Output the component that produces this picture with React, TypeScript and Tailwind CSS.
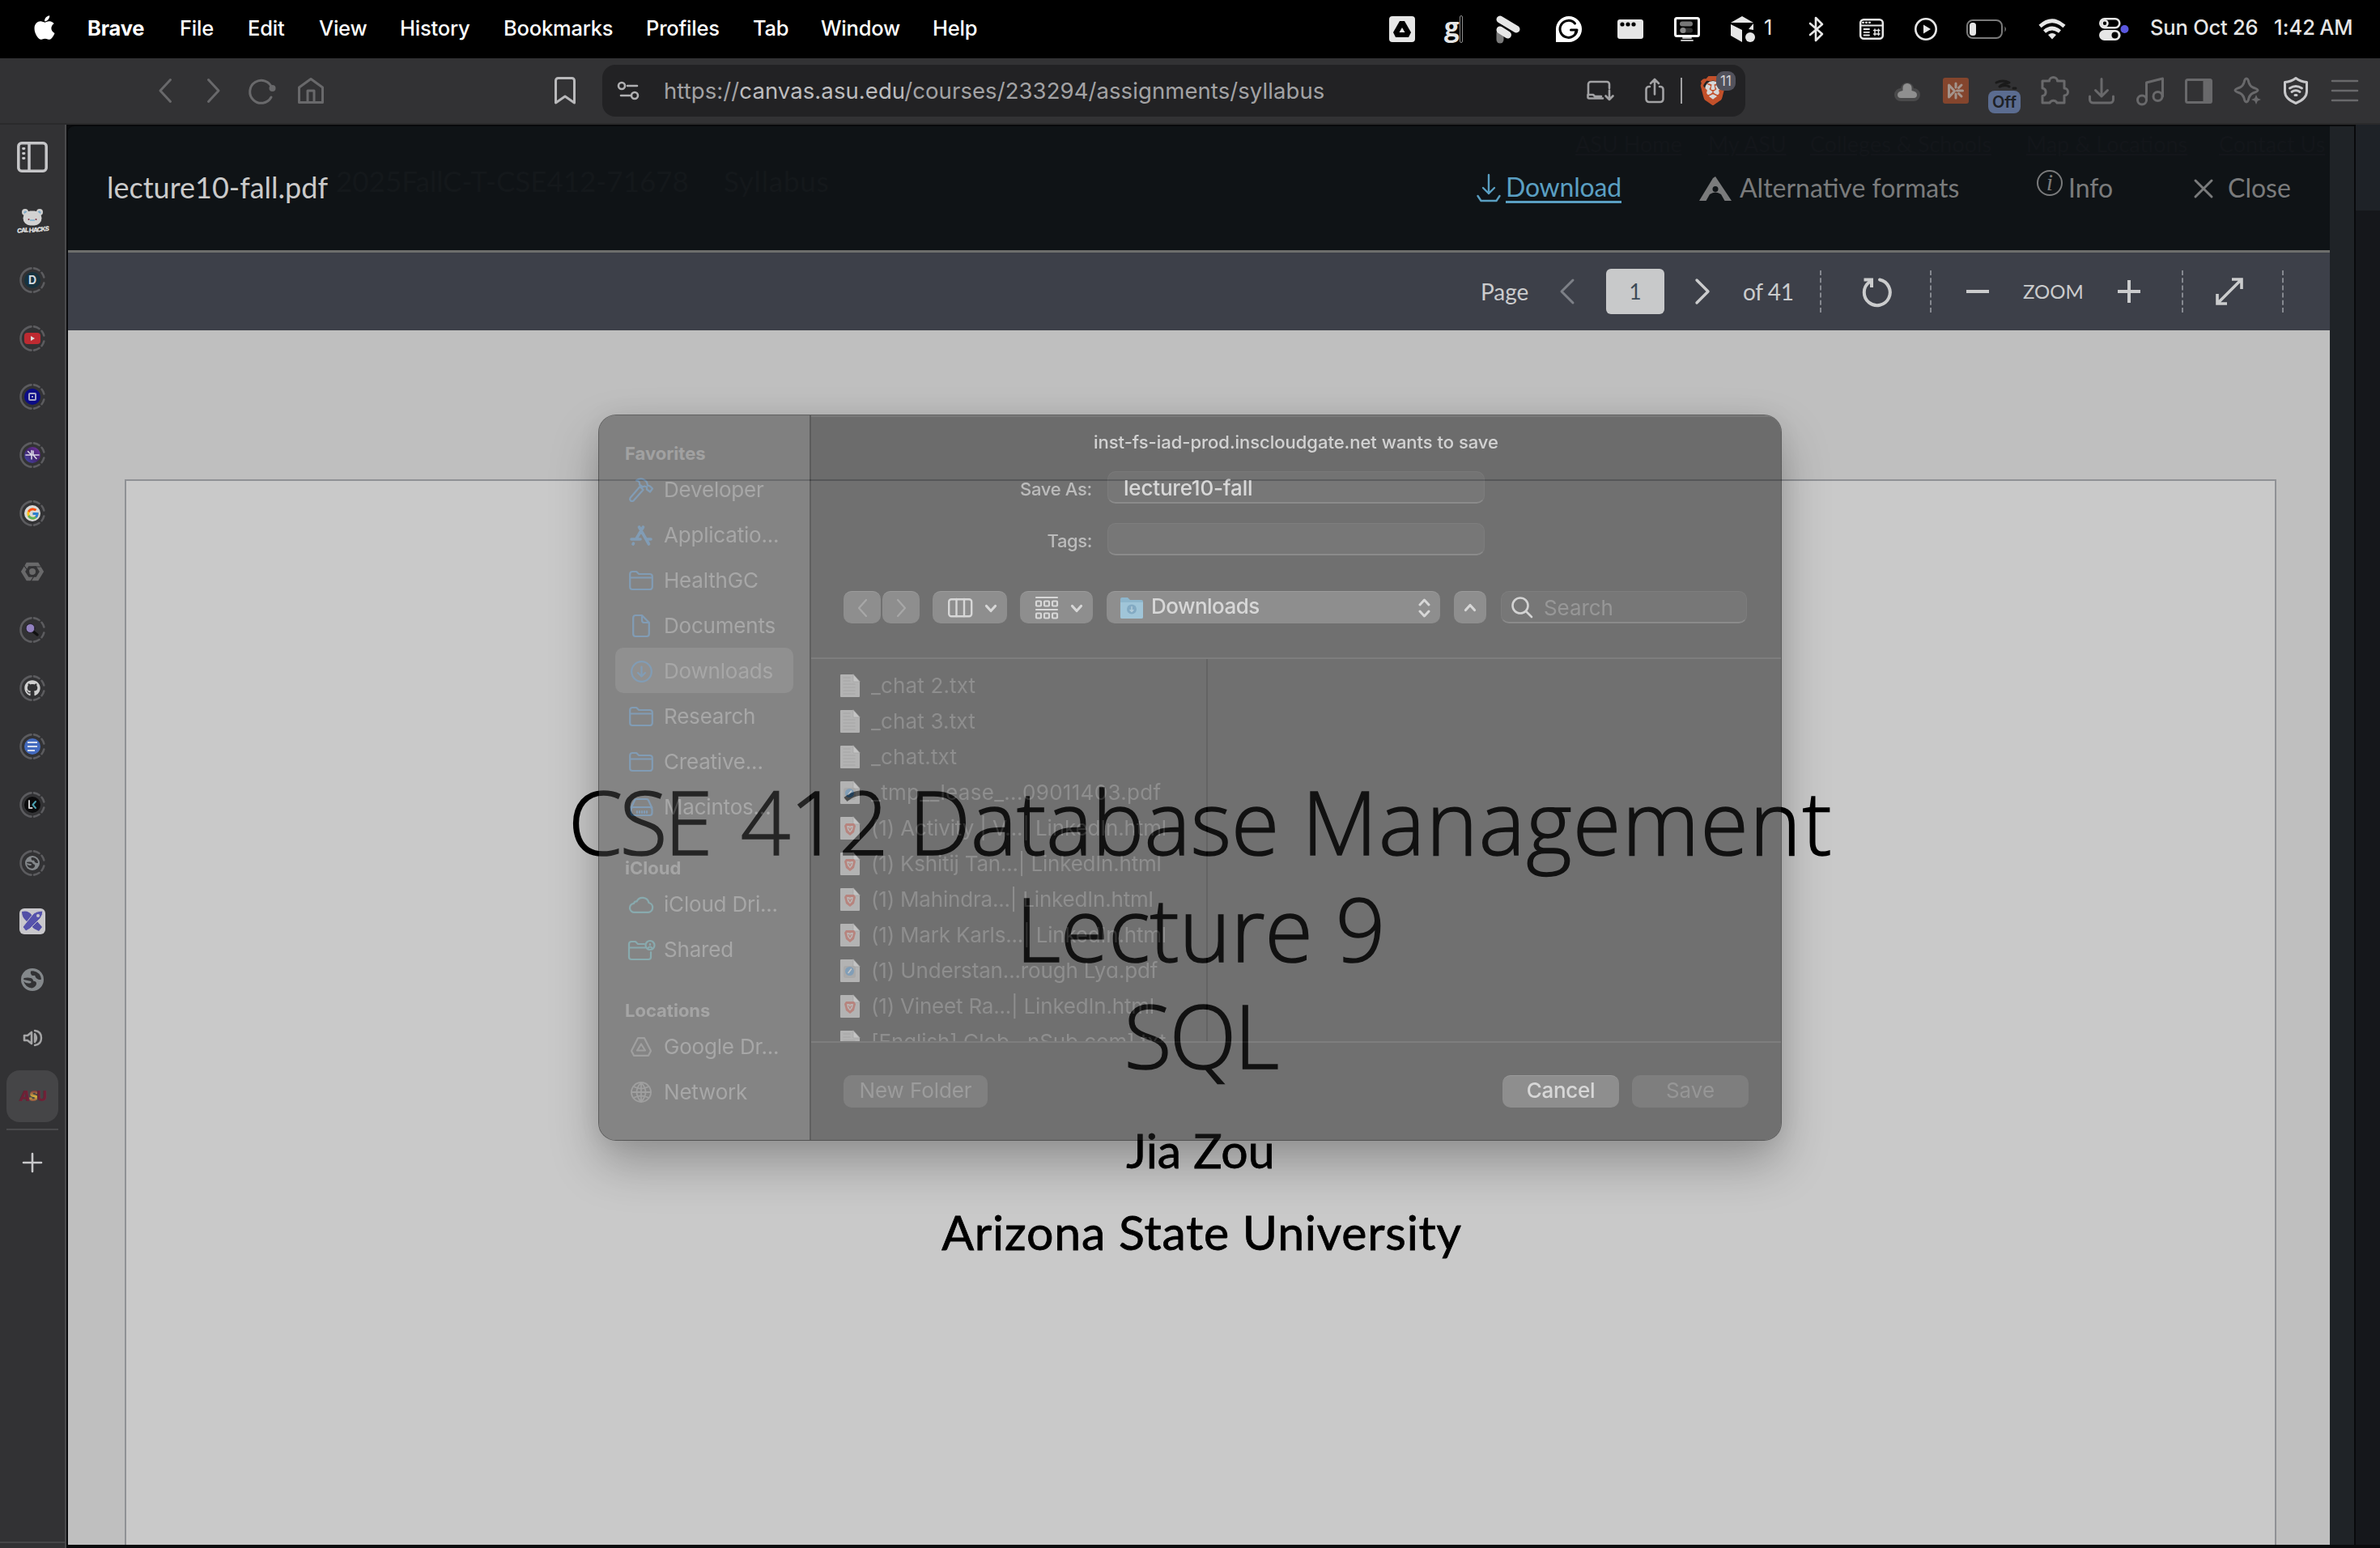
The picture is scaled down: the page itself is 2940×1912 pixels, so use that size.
import type { ReactNode } from "react";
import { FaApple, FaGithub } from "react-icons/fa";
import { FcGoogle } from "react-icons/fc";
import { SiBrave } from "react-icons/si";

function Svg({ w, h, className = "", sw = 2, children }: { w: number; h: number; className?: string; sw?: number; children: ReactNode }) {
  return (
    <svg
      width={w}
      height={h}
      viewBox={`0 0 ${w} ${h}`}
      fill="none"
      stroke="currentColor"
      strokeWidth={sw}
      strokeLinecap="round"
      strokeLinejoin="round"
      className={`block shrink-0 overflow-visible ${className}`}
    >
      {children}
    </svg>
  );
}

const menus = [
  { label: "File", w: "w-[84px]" },
  { label: "Edit", w: "w-[88px]" },
  { label: "View", w: "w-[100px]" },
  { label: "History", w: "w-[128px]" },
  { label: "Bookmarks", w: "w-[176px]" },
  { label: "Profiles", w: "w-[132px]" },
  { label: "Tab", w: "w-[84px]" },
  { label: "Window", w: "w-[138px]" },
  { label: "Help", w: "w-[80px]" },
];

function MenuBar() {
  return (
    <header className="flex h-[72px] shrink-0 items-center bg-black pb-[3px] text-[25.5px] font-medium leading-none tracking-[-0.2px] text-white">
      <FaApple className="ml-[38px] mt-[-2px] size-[34px] shrink-0" />
      <span className="ml-[36px] w-[114px] font-bold">Brave</span>
      {menus.map((m) => (
        <span key={m.label} className={`${m.w} shrink-0`}>
          {m.label}
        </span>
      ))}
      <div className="ml-auto flex h-[72px] items-center pt-[3px] text-[#e6e6e6]">
        <Svg w={32} h={32}>
          <rect width="32" height="32" rx="4" fill="#e6e6e6" stroke="none" />
          <path d="M13 6h6l8 14-3 6H8l-3-6z" fill="#000" stroke="none" />
          <path d="M16 14l3.500 6h-7z" fill="#e6e6e6" stroke="none" />
        </Svg>
        <span className="ml-[36px] flex w-[24px] items-center">
          <span className="mt-[-8px] font-['Open_Sans'] text-[33px] font-bold leading-none tracking-normal">g</span>
          <span className="h-[34px] w-[4px] shrink-0 rounded-sm border border-[#8a8a8a]" />
        </span>
        <Svg w={30} h={34} className="ml-[40px]" sw={9}>
          <path d="M5 22v8" stroke="#7a7a7a" />
          <path d="M5 5l20 12" />
          <path d="M5 18l9.500 6" />
        </Svg>
        <Svg w={32} h={32} className="ml-[44px]" sw={3}>
          <path d="M0 32V16a16 16 0 1 1 16 16z" fill="#fff" stroke="none" />
          <path d="M23.500 9A10.500 10.500 0 1 0 26 17h-7.500M26 17l-2 4" stroke="#000" />
        </Svg>
        <Svg w={32} h={24} className="ml-[44px]">
          <rect width="32" height="24" rx="3" fill="#e6e6e6" stroke="none" />
          <g fill="#000" stroke="none">
            <circle cx="6" cy="6" r="2.600" />
            <circle cx="13" cy="6" r="2.600" />
            <circle cx="20" cy="6" r="2.600" />
          </g>
        </Svg>
        <Svg w={32} h={30} className="ml-[38px]" sw={3}>
          <rect x="1.500" y="1.500" width="29" height="22" rx="2" stroke="#fff" />
          <rect x="7" y="5.500" width="16" height="6" rx="3" fill="#777" stroke="none" />
          <rect x="7" y="13.500" width="16" height="6" rx="3" fill="#333" stroke="none" />
          <circle cx="11" cy="16.500" r="3.500" fill="#888" stroke="none" />
          <path d="M11 26h10M9 29h14" strokeWidth="2" stroke="#bbb" />
        </Svg>
        <Svg w={30} h={32} className="ml-[38px]">
          <g fill="#e6e6e6" stroke="none">
            <path d="M14 0l14 8H0z" />
            <path d="M0 10l14 7v15L0 24z" />
            <path d="M28 9v8l-6-1 6-7z" />
            <circle cx="24" cy="26" r="6" />
          </g>
        </Svg>
        <span className="ml-[11px] mt-[-5px] w-[14px] font-normal">1</span>
        <Svg w={17} h={30} className="ml-[42px]" sw={2.600}>
          <path d="M1 8l15 13-8 8V1l8 8L1 22" />
        </Svg>
        <Svg w={30} h={26} className="ml-[45px]" sw={2.500}>
          <rect x="1.200" y="1.200" width="27.600" height="23.600" rx="4" />
          <path d="M4 4.800h1M8 4.800h1M12 4.800h1" strokeWidth="2.200" />
          <path d="M1.500 8.500h27" strokeWidth="1.800" />
          <path d="M5.500 13h6.500M5.500 16.800h6.500M5.500 20.500h6.500" strokeWidth="1.800" />
          <path d="M17.500 14.500h7.500M17.500 19h7.500M19 13v7.500M23.500 13v7.500" strokeWidth="1.500" />
        </Svg>
        <Svg w={28} h={28} className="ml-[38px]" sw={2.600}>
          <circle cx="14" cy="14" r="12.700" />
          <path d="M11 8.500v11l9-5.500z" fill="#e6e6e6" stroke="none" />
        </Svg>
        <Svg w={50} h={24} className="ml-[36px]" sw={2}>
          <rect x="1" y="1" width="43" height="22" rx="7" stroke="#7a7a7a" />
          <path d="M47.500 8.500q3 3.500 0 7z" fill="#7a7a7a" stroke="none" />
          <rect x="4" y="4" width="8" height="16" rx="3.500" fill="#e6e6e6" stroke="none" />
        </Svg>
        <Svg w={34} h={26} className="ml-[39px]" sw={4.600}>
          <path d="M2 9.500q15-13.500 30 0M7.500 16q9.500-8 19 0" strokeLinecap="butt" />
          <path d="M12 20q5-4 10 0L17 25.500z" fill="#e6e6e6" stroke="none" />
        </Svg>
        <Svg w={38} h={28} className="ml-[41px]" sw={2.600}>
          <rect x="1.300" y="1.300" width="24" height="11" rx="5.500" />
          <circle cx="7" cy="6.800" r="3.500" />
          <rect x="0" y="15" width="26.600" height="13" rx="6.500" fill="#e6e6e6" stroke="none" />
          <circle cx="19.500" cy="21.500" r="4" fill="#000" stroke="none" />
          <circle cx="31.500" cy="14" r="5" fill="#5b58e0" stroke="none" />
        </Svg>
        <span className="ml-[25px] mt-[-5px] w-[153px] shrink-0 whitespace-nowrap">Sun Oct 26</span>
        <span className="mr-[20px] mt-[-5px] w-[111px] shrink-0 whitespace-nowrap tracking-[0.1px]">
          1:42<span className="ml-[5px]">AM</span>
        </span>
      </div>
    </header>
  );
}

function BraveShield({ className }: { className: string }) {
  return (
    <span className={`relative flex shrink-0 items-center justify-center ${className}`}>
      <span className="absolute left-[22%] top-[18%] h-[62%] w-[56%] rounded-[10px] bg-[#d8d8d8]" />
      <SiBrave className="relative size-full" />
    </span>
  );
}

function BrowserBar() {
  return (
    <div className="flex h-[82px] shrink-0 items-center border-b-2 border-[#2a2a2b] bg-[#323234] text-[#69696b]">
      <Svg w={16} h={30} className="ml-[196px]" sw={3}>
        <path d="M14.500 1.500L2 15l12.500 13.500" />
      </Svg>
      <Svg w={16} h={30} className="ml-[44px]" sw={3}>
        <path d="M1.500 1.500L14 15 1.500 28.500" />
      </Svg>
      <Svg w={34} h={32} className="ml-[35px]" sw={3}>
        <path d="M29 13A14 14 0 1 0 28 24" />
        <circle cx="29.500" cy="13" r="4" fill="currentColor" stroke="none" />
      </Svg>
      <Svg w={32} h={32} className="ml-[27px]" sw={3}>
        <path d="M1.500 12L16 1.500 30.500 12v18.500h-29zM12 30V16h8v14" />
      </Svg>
      <Svg w={26} h={34} className="ml-[285px] text-[#b9b9bb]" sw={3}>
        <path d="M1.500 4.500a3 3 0 0 1 3-3h17a3 3 0 0 1 3 3v27.500L13 24 1.500 32z" />
      </Svg>
      <div className="ml-[33px] flex h-[64px] w-[1412px] shrink-0 items-center rounded-[16px] bg-[#222224] text-[#a2a2a4]">
        <Svg w={26} h={22} className="ml-[19px] text-[#b0b0b2]" sw={2.600}>
          <circle cx="5" cy="5" r="4" />
          <path d="M12 5h12M4 17h12" />
          <circle cx="21" cy="17" r="4" />
        </Svg>
        <span className="ml-[31px] w-[1128px] whitespace-nowrap pt-px text-[27.5px] leading-none tracking-[0.08px]">
          https://<span className="text-[#bcbcbe]">canvas.asu.edu</span>/courses/233294/assignments/syllabus
        </span>
        <Svg w={34} h={26} className="ml-[12px]" sw={2.600}>
          <path d="M28 10V5a3 3 0 0 0-3-3H5a3 3 0 0 0-3 3v13M20 22.500H3a1.500 1.500 0 0 1-1.500-1.500v-3H8l2 2h8" />
          <path d="M28 12.500V24M23.500 19.500L28 24l4.500-4.500" />
        </Svg>
        <Svg w={24} h={32} className="ml-[38px]" sw={2.600}>
          <path d="M6 11H5a3.500 3.500 0 0 0-3.500 3.500v12A3.500 3.500 0 0 0 5 30h14a3.500 3.500 0 0 0 3.500-3.500v-12A3.500 3.500 0 0 0 19 11h-1M12 20.500V2M7 7l5-5 5 5" />
        </Svg>
        <span className="ml-[20px] h-[32px] w-[2px] shrink-0 bg-[#a2a2a4]" />
        <span className="relative ml-[20px] shrink-0">
          <BraveShield className="h-[36px] w-[36px] text-[#c2502a]" />
          <span className="absolute left-[22px] top-[-6px] flex size-[24px] items-center justify-center rounded-[9px] bg-[#52525c] text-[17px] leading-none text-[#d4d4d4]">
            11
          </span>
        </span>
      </div>
      <Svg w={32} h={26} className="ml-[184px]">
        <path d="M9 11a7 7 0 0 1 14 0a7 7 0 0 1 8 7a7 7 0 0 1-7 7H8a7 7 0 0 1-7-7a7 7 0 0 1 8-7z" fill="#4a4a4b" stroke="#4a4a4b" />
        <path d="M10.500 13V9.500a5.500 5.500 0 0 1 11 0V13q6.500 1 6.500 5 0 4-4 4H8q-4 0-4-4 0-4 6.500-5z" fill="#8f8f8f" stroke="none" />
      </Svg>
      <Svg w={32} h={32} className="ml-[28px]" sw={3}>
        <rect width="32" height="32" rx="3" fill="#84452d" stroke="none" />
        <path d="M7.500 9v15l7-7.500zM17.500 16h7M16 12V7M16 20v5M19.500 12.500l3.500-3.500M19.500 19.500l3.500 3.500" stroke="#a3948c" />
      </Svg>
      <div className="ml-[24px] flex w-[40px] shrink-0 flex-col items-center pt-[14px]">
        <Svg w={30} h={14} className="text-[#1a1a1a]" sw={3}>
          <path d="M5 4q8-4 16 0q-8 1-12 5q8-3 12 0M26 11h3" />
        </Svg>
        <span className="flex h-[28px] w-[40px] items-center justify-center rounded-[8px] bg-[#5b6c90] pb-px text-[20px] font-semibold leading-none text-[#1e2126]">
          Off
        </span>
      </div>
      <Svg w={34} h={34} className="ml-[25px]" sw={3}>
        <path d="M2 5h8.500a5 4.500 0 0 1 10 0H29v9a4.500 4.500 0 0 1 0 9v9h-9a5 5 0 0 0-9 0H2v-8.500a4.800 4.800 0 0 0 0-9.500z" />
      </Svg>
      <Svg w={32} h={32} className="ml-[25px]" sw={3}>
        <path d="M16 1.500V23M8.500 15.500L16 23l7.500-7.500M1.500 23v4a4 4 0 0 0 4 4h21a4 4 0 0 0 4-4v-4" />
      </Svg>
      <Svg w={34} h={34} className="ml-[27px]" sw={3}>
        <path d="M12.500 28.500V7l20-5v22" />
        <circle cx="7" cy="28.500" r="5.500" />
        <circle cx="26.500" cy="24" r="5.500" />
      </Svg>
      <Svg w={34} h={31} className="ml-[26px]" sw={3}>
        <rect x="1.500" y="1.500" width="31" height="28" rx="2" />
        <path d="M24 2h8v27h-8z" fill="currentColor" />
      </Svg>
      <Svg w={34} h={34} className="ml-[26px]" sw={3}>
        <path d="M16 2q2 0 3 5 1 4 5 6 6 2 6 3.500t-6 3.500q-4 2-5 6-1 5-3 5t-3-5q-1-4-5-6-6-2-6-3.500T8 13q4-2 5-6 1-5 3-5z" />
        <path d="M28 22l1.800 4.200L34 28l-4.200 1.800L28 34l-1.800-4.200L22 28l4.200-1.800z" fill="currentColor" stroke="none" />
      </Svg>
      <Svg w={30} h={34} className="ml-[28px] text-[#c8c8ca]" sw={3}>
        <path d="M15 1.500q6 4.500 13.500 5V18q0 9-13.500 14.500Q1.500 27 1.500 18V6.500Q9 6 15 1.500z" />
        <path d="M7.500 14q7.500-5 15 0M10 18.500q5-3.500 10 0M14 22.500h2" />
      </Svg>
      <Svg w={32} h={26} className="ml-[29px]" sw={2.600}>
        <path d="M1 1h31M1 13h31M1 25h31" />
      </Svg>
    </div>
  );
}

function Ring({ children }: { children: ReactNode }) {
  return (
    <div className="grid place-items-center">
      <Svg w={32} h={32} sw={2.600} className="col-start-1 row-start-1 text-[#5c5c5f]">
        <path d="M14.500 1.400A14.700 14.700 0 0 0 14.500 30.600" />
        <path d="M18 1.400A14.700 14.700 0 0 1 24.500 4M27.500 6.800A14.700 14.700 0 0 1 30.300 12.500M30.300 19.500A14.700 14.700 0 0 1 27.500 25.200M24.500 28A14.700 14.700 0 0 1 18 30.600" />
      </Svg>
      <div className="col-start-1 row-start-1">{children}</div>
    </div>
  );
}

function Globe({ size }: { size: number }) {
  return (
    <svg width={size} height={size} viewBox="0 0 28 28" className="block">
      <circle cx="14" cy="14" r="14" fill="#84888b" />
      <path d="M3.500 12q5-1 8.500 0 3 1 3 3.500 4 .5 4 3 0 4-5.500 6A11 11 0 0 1 3.200 16q3 3 7 2.500 3 0 2-2.500-4-1-9-2zM12 3.500q-1 3 1 5 3 1 4 0 1 4 4 5 2 1 4 0Q24 5 15 3.300z" fill="#323234" />
    </svg>
  );
}

function TabStrip() {
  const tabs: ReactNode[] = [
    <div className="flex flex-col items-center">
      <Svg w={26} h={20}>
        <g stroke="none">
          <circle cx="4" cy="4" r="4" fill="#cfcfcf" />
          <circle cx="22" cy="4" r="4" fill="#cfcfcf" />
          <circle cx="4.500" cy="4.500" r="2" fill="#7aa7c6" />
          <circle cx="21.500" cy="4.500" r="2" fill="#7aa7c6" />
          <rect x="1.500" y="2.500" width="23" height="18" rx="9" fill="#d2d2d2" />
          <path d="M10 13h6v2h-6z" fill="#8fb9d0" />
          <circle cx="8.500" cy="13" r="1" fill="#7a3040" />
          <circle cx="17.500" cy="13" r="1" fill="#7a3040" />
        </g>
      </Svg>
      <span className="flex -rotate-6 gap-px text-[8px] font-black italic leading-[11px] tracking-[-1px] text-[#d8d8d8]">
        <span>CAL</span>
        <span className="pt-px">HACKS</span>
      </span>
    </div>,
    <Ring>
      <div className="flex size-[20px] items-center justify-center rounded-full bg-[#17333f] text-[14px] font-bold leading-none text-[#d5dbe0]">D</div>
    </Ring>,
    <Ring>
      <div className="flex h-[14px] w-[20px] items-center justify-center rounded-[4px] bg-[#be2a31]">
        <Svg w={5} h={6}>
          <path d="M0 0l5 3-5 3z" fill="#ddd" stroke="none" />
        </Svg>
      </div>
    </Ring>,
    <Ring>
      <div className="flex size-[20px] items-center justify-center rounded-full bg-[#0b0b86]">
        <div className="flex size-[10px] items-center justify-center rounded-[2px] border-2 border-[#a9a9c8]">
          <div className="size-[2px] bg-[#a9a9c8]" />
        </div>
      </div>
    </Ring>,
    <Ring>
      <div className="flex size-[20px] items-center justify-center rounded-full bg-linear-to-tr from-[#3f4bb0] via-[#43246f] to-[#7a35a8]">
        <Svg w={16} h={14} sw={1.600} className="text-[#d8d4e4]">
          <path d="M0 7h16M7 1.500V12M9 2v5l4 4.500M2.500 2.500L7 7" />
        </Svg>
      </div>
    </Ring>,
    <Ring>
      <div className="flex size-[20px] items-center justify-center rounded-full bg-[#d8d8d8]">
        <FcGoogle className="size-[17px] opacity-90" />
      </div>
    </Ring>,
    <Svg w={28} h={24} sw={4.500} className="text-[#69696a]">
      <path d="M8 3h12l5.500 9-5.500 9H8L2.500 12z" strokeLinejoin="miter" />
      <circle cx="14" cy="12" r="4" fill="currentColor" stroke="none" />
      <path d="M4 5l6 8M24 6h-9M12 24l5-8" stroke="#323234" strokeWidth="1.200" />
    </Svg>,
    <Ring>
      <Svg w={20} h={20} sw={3.500}>
        <path d="M11 12l5 4" stroke="#111" />
        <circle cx="7.500" cy="8" r="5.500" fill="#9382c0" stroke="#221f2c" strokeWidth="1" />
      </Svg>
    </Ring>,
    <Ring>
      <FaGithub className="size-[20px] text-[#cfcfcf]" />
    </Ring>,
    <Ring>
      <div className="flex size-[20px] flex-col justify-center gap-[3px] rounded-full bg-[#446bbf] pl-[4px]">
        <div className="h-[2px] w-[12px] bg-[#d5dcec]" />
        <div className="h-[2px] w-[12px] bg-[#d5dcec]" />
        <div className="h-[2px] w-[9px] bg-[#d5dcec]" />
      </div>
    </Ring>,
    <Ring>
      <div className="flex size-[20px] items-center justify-center rounded-full bg-[#0b0b0c]">
        <Svg w={10} h={10} sw={2}>
          <path d="M1 0v9h3.500" stroke="#c8c8c8" />
          <path d="M9 1L5.500 5 9 9" stroke="#4aa0b0" />
        </Svg>
      </div>
    </Ring>,
    <Ring>
      <Globe size={18} />
    </Ring>,
    <Svg w={32} h={32}>
      <rect width="32" height="32" rx="6" fill="#c9c8cc" stroke="none" />
      <path d="M3 4q8-2 12 4l13 15-4 5-6-3L7 14q-4-4-4-10z" fill="#524fa6" stroke="none" />
      <path d="M29 3q-9 0-13 5L4 23l4 5 5-3 13-13q3-4 3-9z" fill="#5653ac" stroke="#c9c8cc" strokeWidth="1" />
      <circle cx="23" cy="9" r="2" fill="#c9c8cc" stroke="none" />
    </Svg>,
    <Globe size={28} />,
    <Svg w={24} h={22} sw={2.600} className="text-[#a5a5a6]">
      <path d="M2 8h4l5-4v14l-5-4H2z" />
      <path d="M15 6q4 5 0 10zM15 2q8 1 8 9t-8 9" strokeWidth="2.400" />
    </Svg>,
  ];
  return (
    <aside className="flex w-[80px] shrink-0 flex-col items-center bg-[#323234]">
      <Svg w={38} h={38} sw={3.500} className="mt-[21px] text-[#c6c6c8]">
        <rect x="1.800" y="1.800" width="34.400" height="34.400" rx="4" />
        <path d="M15 2v34" />
        <path d="M7.500 8.500h1.500M7.500 14.500h1.500M7.500 20.500h1.500" strokeWidth="2.800" />
      </Svg>
      <div className="mt-[25px] flex flex-col">
        {tabs.map((t, i) => (
          <div key={i} className="flex h-[72px] w-[80px] items-center justify-center">
            {t}
          </div>
        ))}
        <div className="flex h-[72px] items-center justify-center">
          <div className="flex size-[64px] items-center justify-center rounded-[16px] bg-[#454547]">
            <span className="flex items-center text-[17px] font-black leading-none tracking-[-1.5px] text-[#6f2136]">
              <span className="italic">A</span>
              <span className="bg-linear-to-b from-[#6f2136] via-[#d3b13c] to-[#6f2136] bg-clip-text italic text-transparent">S</span>
              <span>U</span>
            </span>
          </div>
        </div>
      </div>
      <div className="mt-[4px] h-[2px] w-[64px] bg-[#4a4a4c]" />
      <Svg w={22} h={22} sw={2.600} className="mt-[29px] text-[#c8c8ca]">
        <path d="M11 0v22M0 11h22" />
      </Svg>
      <div className="mb-[6px] mt-auto h-[2px] w-[80px] bg-[#464648]" />
    </aside>
  );
}

function ViewerHeader() {
  const ghostLinks = [
    { t: "ASU Home", w: "w-[164px]" },
    { t: "My ASU", w: "w-[126px]" },
    { t: "Colleges & Schools", w: "w-[267px]" },
    { t: "Map & Locations", w: "w-[238px]" },
    { t: "Contact Us", w: "w-[137px]" },
  ];
  return (
    <div className="relative flex h-[158px] shrink-0 items-center rounded-tl-[8px] border-b-[3px] border-t-2 border-b-[#6d6e6c] border-t-[#08090b] bg-[#0f1316] font-['Lato'] text-[32px] leading-none text-[#7a7b7c]">
      <div className="absolute right-0 top-[8px] flex text-[27px] text-[#13161a]">
        {ghostLinks.map((g) => (
          <span key={g.t} className={`${g.w} shrink-0 whitespace-nowrap underline`}>
            {g.t}
          </span>
        ))}
      </div>
      <div className="absolute left-[331px] top-[50px] flex gap-[43px] whitespace-nowrap text-[35px] text-[#14181b]">
        <span>2025FallC-T-CSE412-71678</span>
        <span className="tracking-[0.8px]">Syllabus</span>
      </div>
      <span className="relative ml-[48px] w-[1692px] pb-[3px] text-[36px] text-[#cacaca]">lecture10-fall.pdf</span>
      <Svg w={30} h={34} sw={2.400} className="relative mt-[-2px] text-[#5a9fc2]">
        <path d="M15 1v23M8 17l7 7 7-7M1.500 27l4 6h19l4-6" />
      </Svg>
      <span className="relative ml-[6px] w-[143px] shrink-0 border-b-[3px] border-[#5a9fc2] pb-px tracking-[-0.2px] text-[#5a9fc2]">Download</span>
      <Svg w={40} h={30} className="ml-[96px]">
        <path d="M20 0L40 30H31.500L27 22Q20 17 13 22L8.500 30H0L17 2z" fill="currentColor" stroke="none" />
        <circle cx="20" cy="15.500" r="3.500" fill="#0f1316" stroke="none" />
      </Svg>
      <span className="ml-[10px] w-[272px] shrink-0 whitespace-nowrap pb-px">Alternative formats</span>
      <span className="mb-[13px] ml-[95px] flex size-[32px] shrink-0 items-center justify-center rounded-full border-2 border-[#7a7b7c] pb-[3px] font-['Liberation_Serif'] text-[30px] italic">
        i
      </span>
      <span className="ml-[7px] w-[156px] shrink-0 pb-px">Info</span>
      <Svg w={22} h={20} sw={3}>
        <path d="M1 0l20 20M21 0L1 20" />
      </Svg>
      <span className="ml-[19px] shrink-0 pb-px">Close</span>
    </div>
  );
}

function Dotted({ className }: { className: string }) {
  return <span className={`h-[52px] w-0 shrink-0 border-l-2 border-dashed border-[#85888f] ${className}`} />;
}

function ViewerToolbar() {
  return (
    <div className="flex h-[96px] shrink-0 items-center bg-[#3d4049] font-['Lato'] text-[28px] leading-none text-[#cbcccd]">
      <span className="ml-[1745px] w-[98px] shrink-0">Page</span>
      <Svg w={18} h={30} sw={3} className="text-[#7d8087]">
        <path d="M16 1L2 15l14 14" />
      </Svg>
      <span className="ml-[39px] flex h-[56px] w-[72px] shrink-0 items-center justify-center rounded-[6px] bg-[#c8c9ca] text-[26px] text-[#3c4a57]">1</span>
      <Svg w={18} h={30} sw={3.400} className="ml-[38px]">
        <path d="M2 1l14 14L2 29" />
      </Svg>
      <span className="ml-[41px] w-[95px] shrink-0 whitespace-nowrap tracking-[-0.4px]">of 41</span>
      <Dotted className="" />
      <Svg w={36} h={37} sw={4} className="ml-[51px]">
        <path d="M21 3.500A16 16 0 1 1 8 6.500" />
        <path d="M1.500 3.500H11V13" strokeLinecap="butt" strokeLinejoin="miter" />
      </Svg>
      <Dotted className="ml-[47px]" />
      <Svg w={28} h={28} sw={4} className="ml-[43px]">
        <path d="M0 14h28" strokeLinecap="butt" />
      </Svg>
      <span className="ml-[42px] w-[76px] shrink-0 text-[24px]">ZOOM</span>
      <Svg w={28} h={28} sw={4} className="ml-[41px]">
        <path d="M0 14h28M14 0v28" strokeLinecap="butt" />
      </Svg>
      <Dotted className="ml-[51px]" />
      <Svg w={34} h={34} sw={3.600} className="ml-[40px]">
        <path d="M3 31L31 3M20 2h12v12M2 20v12h12" strokeLinecap="butt" strokeLinejoin="miter" />
      </Svg>
      <Dotted className="ml-[48px]" />
    </div>
  );
}

function Folder() {
  return (
    <Svg w={30} h={24} sw={2.200}>
      <path d="M1.200 20V4a3 3 0 0 1 3-3h5l3 3h13.600a3 3 0 0 1 3 3v13a3 3 0 0 1-3 3H4.200a3 3 0 0 1-3-3zM1.200 8.500h27.600" />
    </Svg>
  );
}

const favorites: { label: string; icon: ReactNode; active?: boolean }[] = [
  {
    label: "Developer",
    icon: (
      <Svg w={30} h={30} sw={2.200}>
        <path d="M1.500 25l12-14 4 4-12 13.500q-2 1-3.500 0-1.500-1.500-.5-3.500zM9 3.500q7-5 13 2l1 4 3 1 3 3-3 4-4-3v-3l-3-1-2 1-4-3q1-4-4-5z" />
      </Svg>
    ),
  },
  {
    label: "Applicatio...",
    icon: (
      <Svg w={28} h={25} sw={3.600}>
        <path d="M11.500 2l12 21M16.500 2L8 16.500M2 17h11M20 17h6M4 23l.5-.8" />
      </Svg>
    ),
  },
  { label: "HealthGC", icon: <Folder /> },
  {
    label: "Documents",
    icon: (
      <Svg w={22} h={28} sw={2.200}>
        <path d="M1.200 4a3 3 0 0 1 3-3H12l8.800 9v14a3 3 0 0 1-3 3H4.200a3 3 0 0 1-3-3zM12 1v6a3 3 0 0 0 3 3h6" />
      </Svg>
    ),
  },
  {
    label: "Downloads",
    active: true,
    icon: (
      <Svg w={27} h={27} sw={2.200}>
        <circle cx="13.500" cy="13.500" r="12.300" />
        <path d="M13.500 7.500V19M9 15l4.500 4.500L18 15" />
      </Svg>
    ),
  },
  { label: "Research", icon: <Folder /> },
  { label: "Creative...", icon: <Folder /> },
  {
    label: "Macintos...",
    icon: (
      <Svg w={29} h={22} sw={2.200}>
        <path d="M1.500 12L6 2.500q.7-1.500 2.500-1.500h12q1.800 0 2.500 1.500L27.500 12M1.500 14q0-3 3-3h20q3 0 3 3v4q0 3-3 3h-20q-3 0-3-3zM9 16v2M12 16v2M15 16v2M18 16v2M21 16v2" />
      </Svg>
    ),
  },
];

const icloud = [
  {
    label: "iCloud Dri...",
    icon: (
      <Svg w={31} h={22} sw={2.200}>
        <path d="M7 20.800a5.500 5.500 0 0 1-1-11Q7 7 9.500 7.500A8 8 0 0 1 24.500 9 6 6 0 0 1 24 20.800z" />
      </Svg>
    ),
  },
  {
    label: "Shared",
    icon: (
      <Svg w={33} h={25} sw={2.200}>
        <path d="M20 5h-8L9 2H4a3 3 0 0 0-3 3v16a3 3 0 0 0 3 3h21a3 3 0 0 0 3-3v-6M1 9.500h20" />
        <circle cx="27" cy="6.500" r="5.500" />
        <path d="M24.500 10q2.500-3 5 0M27 5v1" />
      </Svg>
    ),
  },
];

const locations = [
  {
    label: "Google Dr...",
    icon: (
      <Svg w={26} h={24} sw={2.200}>
        <path d="M9 1.200h8L25 17l-3 5.800H4L1 17zM13 8.500L8 16.500h10z" />
      </Svg>
    ),
  },
  {
    label: "Network",
    icon: (
      <Svg w={26} h={26} sw={1.800}>
        <circle cx="13" cy="13" r="12" />
        <path d="M13 1v24M1 13h24M3.500 6q9.500 5 19 0M3.500 20q9.500-5 19 0M13 1Q2 13 13 25M13 1q11 12 0 24" />
      </Svg>
    ),
  },
];

function PlaceRow({ label, icon, active, tone }: { label: string; icon: ReactNode; active?: boolean; tone: string }) {
  return (
    <div className={`ml-[20px] flex h-[56px] w-[220px] items-center rounded-[10px] ${active ? "bg-[#5e5e5e]" : ""}`}>
      <span className={`ml-[15px] flex w-[34px] justify-center pt-[2px] ${tone}`}>{icon}</span>
      <span className="ml-[11px] whitespace-nowrap pt-[2px] text-[26px] leading-none tracking-[-0.2px] text-[#8a8a8a]">{label}</span>
    </div>
  );
}

function PlaceHeading({ children }: { children: ReactNode }) {
  return <div className="flex h-[32px] items-center pl-[32px] text-[22px] font-bold leading-none text-[#868686]">{children}</div>;
}

type FileKind = "txt" | "pdf" | "html";

const files: { name: string; kind: FileKind; track: string }[] = [
  { name: "_chat 2.txt", kind: "txt", track: "tracking-[0.15px]" },
  { name: "_chat 3.txt", kind: "txt", track: "tracking-[0.15px]" },
  { name: "_chat.txt", kind: "txt", track: "tracking-[0.2px]" },
  { name: "_tmp__lease_...09011403.pdf", kind: "pdf", track: "tracking-[0.3px]" },
  { name: "(1) Activity | V...| LinkedIn.html", kind: "html", track: "tracking-[-0.15px]" },
  { name: "(1) Kshitij Tan...| LinkedIn.html", kind: "html", track: "tracking-[-0.2px]" },
  { name: "(1) Mahindra...| LinkedIn.html", kind: "html", track: "tracking-[-0.2px]" },
  { name: "(1) Mark Karls...| LinkedIn.html", kind: "html", track: "tracking-[-0.2px]" },
  { name: "(1) Understan...rough Lyɑ.pdf", kind: "pdf", track: "tracking-[-0.15px]" },
  { name: "(1) Vineet Ra...| LinkedIn.html", kind: "html", track: "tracking-[-0.2px]" },
  { name: "[English] Glob...nSub.com].txt", kind: "txt", track: "tracking-[-0.1px]" },
];

function FileIcon({ kind }: { kind: FileKind }) {
  return (
    <Svg w={24} h={28} sw={1.200}>
      <path d="M1 0h15l8 9v18a1 1 0 0 1-1 1H1a1 1 0 0 1-1-1V1a1 1 0 0 1 1-1z" fill="#a0a0a0" stroke="none" />
      <path d="M16 0v9h8z" fill="#c0c0c0" stroke="#7c7c7c" strokeWidth=".6" />
      {kind === "txt" && <path d="M4 4h8M4 8h8M4 12h15M4 16h15M4 20h15M4 24h14" stroke="#858585" strokeDasharray="4 1" />}
      {kind === "pdf" && (
        <>
          <rect x="4" y="8" width="15" height="15" rx="3" fill="#8d8d8d" stroke="none" />
          <circle cx="11.500" cy="14.500" r="5.500" fill="#4278a8" stroke="none" />
          <path d="M10 16.500l3.500-4.500" stroke="#ccc" strokeWidth="1.500" />
        </>
      )}
      {kind === "html" && (
        <>
          <path d="M7 8h10l2 3-2 8-5 4-5-4-2-8z" fill="#a8473c" stroke="none" />
          <path d="M8 11h3l1 1 1-1h3l-1 5-3 3.500L9 16z" fill="#ada6a4" stroke="none" />
          <path d="M10.500 13.500l1.500 3 1.500-3" stroke="#a8473c" />
        </>
      )}
    </Svg>
  );
}

const button = "flex h-[40px] shrink-0 items-center rounded-[10px] border-t border-t-[#727272] bg-[#5a5a5a] text-[#e4e4e4]";
const field = "flex h-[40px] shrink-0 items-center rounded-[10px] border border-b-2 border-[#3a3a3a] border-b-[#545454] bg-[#2e2e2e]";

function ChevronDown() {
  return (
    <Svg w={14} h={9} sw={3.200} className="mt-[2px]">
      <path d="M1.500 1.500L7 7.500l5.500-6" />
    </Svg>
  );
}

function SaveDialog() {
  return (
    <div className="absolute left-[740px] top-[513px] flex h-[895px] w-[1460px] overflow-hidden rounded-[21px] opacity-[0.527]">
      <div className="flex w-[260px] shrink-0 flex-col bg-[#484848] pt-[31px]">
        <PlaceHeading>Favorites</PlaceHeading>
        {favorites.map((f) => (
          <PlaceRow key={f.label} {...f} tone="text-[#4275a4]" />
        ))}
        <div className="h-[32px]" />
        <PlaceHeading>iCloud</PlaceHeading>
        {icloud.map((f) => (
          <PlaceRow key={f.label} {...f} tone="text-[#4f8f96]" />
        ))}
        <div className="h-[32px]" />
        <PlaceHeading>Locations</PlaceHeading>
        {locations.map((f) => (
          <PlaceRow key={f.label} {...f} tone="text-[#7a7a7a]" />
        ))}
      </div>
      <div className="w-[2px] shrink-0 bg-black" />
      <div className="flex min-w-0 flex-1 flex-col border-t-2 border-t-[#3a3a3a] bg-[#222222]">
        <div className="flex h-[67px] items-center justify-center pb-[5px] text-[22px] font-medium leading-none tracking-[-0.02px] text-[#e2e2e2]">
          inst-fs-iad-prod.inscloudgate.net wants to save
        </div>
        <div className="flex items-center">
          <span className="w-[347px] pt-[3px] text-right text-[22px] font-medium leading-none tracking-[-0.3px] text-[#b0b0b0]">Save As:</span>
          <div className={`${field} ml-[19px] w-[466px] pl-[19px] pt-[2px] text-[26px] font-medium leading-none tracking-[-0.2px] text-[#e6e6e6]`}>lecture10-fall</div>
        </div>
        <div className="mt-[24px] flex items-center">
          <span className="w-[347px] pt-[3px] text-right text-[22px] font-medium leading-none tracking-[-0.4px] text-[#b0b0b0]">Tags:</span>
          <div className={`${field} ml-[19px] w-[466px]`} />
        </div>
        <div className="mt-[44px] flex items-center">
          <div className={`${button} ml-[40px] w-[46px] justify-center`}>
            <Svg w={13} h={22} sw={2.200} className="text-[#8a8a8a]">
              <path d="M11 1L2 11l9 10" />
            </Svg>
          </div>
          <div className={`${button} ml-[2px] w-[46px] justify-center`}>
            <Svg w={13} h={22} sw={2.200} className="text-[#8a8a8a]">
              <path d="M2 1l9 10L2 21" />
            </Svg>
          </div>
          <div className={`${button} ml-[16px] w-[92px] gap-[16px] pl-[19px]`}>
            <Svg w={30} h={23} sw={2.400}>
              <rect x="1.200" y="1.200" width="28" height="21" rx="3" />
              <path d="M10.500 1v21M20 1v21" />
            </Svg>
            <ChevronDown />
          </div>
          <div className={`${button} ml-[16px] w-[90px] gap-[16px] pl-[19px]`}>
            <Svg w={28} h={28} sw={2.200}>
              <path d="M1 1h26M1 16h26" />
              <rect x="1" y="5.500" width="6" height="6" rx="1" />
              <rect x="11" y="5.500" width="6" height="6" rx="1" />
              <rect x="21" y="5.500" width="6" height="6" rx="1" />
              <rect x="1" y="20.500" width="6" height="6" rx="1" />
              <rect x="11" y="20.500" width="6" height="6" rx="1" />
              <rect x="21" y="20.500" width="6" height="6" rx="1" />
            </Svg>
            <ChevronDown />
          </div>
          <div className={`${button} ml-[17px] w-[412px] pl-[17px] pr-[12px]`}>
            <Svg w={28} h={26}>
              <g stroke="none">
                <path d="M0 2a2 2 0 0 1 2-2h7l3 3h14a2 2 0 0 1 2 2v19a2 2 0 0 1-2 2H2a2 2 0 0 1-2-2z" fill="#5aa6cf" />
                <path d="M0 6h28v18a2 2 0 0 1-2 2H2a2 2 0 0 1-2-2z" fill="#7cc3e6" />
                <circle cx="14" cy="14.500" r="6" fill="#4590bf" />
              </g>
              <path d="M14 11.500v6M12 15.500l2 2 2-2" stroke="#9fd0ea" strokeWidth="1.500" />
            </Svg>
            <span className="ml-[10px] flex-1 pb-[3px] text-[26px] font-medium leading-none tracking-[-0.55px]">Downloads</span>
            <Svg w={15} h={24} sw={3}>
              <path d="M2 8l5.500-6L13 8M2 16l5.500 6L13 16" />
            </Svg>
          </div>
          <div className={`${button} ml-[17px] w-[40px] justify-center`}>
            <Svg w={14} h={9} sw={3.200}>
              <path d="M1.500 7.500L7 1.500l5.500 6" />
            </Svg>
          </div>
          <div className={`${field} ml-[18px] w-[304px] pl-[12px]`}>
            <Svg w={26} h={26} sw={2.600} className="text-[#dcdcdc]">
              <circle cx="11" cy="11" r="9.500" />
              <path d="M18 18l7 7" />
            </Svg>
            <span className="ml-[14px] pt-[2px] text-[26px] leading-none tracking-[-0.1px] text-[#6c6c6c]">Search</span>
          </div>
        </div>
        <div className="mt-[42px] flex h-[476px] shrink-0 overflow-hidden border-y-2 border-[#3c3c3c]">
          <div className="w-[490px] shrink-0 border-r-2 border-[#080808] pt-[11px]">
            {files.map((f) => (
              <div key={f.name} className="flex h-[44px] items-center pl-[36px]">
                <FileIcon kind={f.kind} />
                <span className={`ml-[14px] whitespace-nowrap text-[26px] leading-none text-[#5a5a5a] ${f.track}`}>{f.name}</span>
              </div>
            ))}
          </div>
          <div className="flex-1" />
        </div>
        <div className="mt-[40px] flex items-center pl-[40px] pr-[40px] text-[26px] leading-none">
          <div className="flex h-[40px] w-[178px] items-center justify-center rounded-[10px] bg-[#404040] pb-[2px] tracking-[-0.1px] text-[#747474]">New Folder</div>
          <div className={`${button} ml-auto w-[144px] justify-center pb-[3px] font-medium tracking-[-0.3px]`}>Cancel</div>
          <div className="ml-[16px] flex h-[40px] w-[144px] items-center justify-center rounded-[10px] bg-[#3c3c3c] pb-[2px] text-[#6a6a6a]">Save</div>
        </div>
      </div>
    </div>
  );
}

function Viewer() {
  return (
    <main className="flex w-[2794px] shrink-0 flex-col">
      <ViewerHeader />
      <ViewerToolbar />
      <div className="flex min-h-0 flex-1 flex-col bg-[#bfbfbf] pl-[70px] pr-[66px] pt-[184px]">
        <div className="flex flex-1 flex-col items-center border-2 border-b-0 border-[#8f9195] bg-[#c9c9c9] pt-[354px] text-black">
          <h1 className="scale-x-[0.99] whitespace-nowrap text-center font-['Open_Sans'] text-[109px] font-light leading-[132px] [-webkit-text-stroke:1.6px_#000]">
            <span className="tracking-[-3.5px]">CSE</span> <span className="ml-[10px] tracking-[-1px]">412</span>{" "}
            <span className="-ml-[2px]">Database</span> <span className="tracking-[1.5px]">Management</span>
            <br />
            Lecture 9
            <br />
            <span className="tracking-[-2.5px]">SQL</span>
          </h1>
          <p className="mt-[26px] whitespace-nowrap text-center font-['Lato'] text-[59px] leading-[101px] [-webkit-text-stroke:0.8px_#000]">
            Jia Zou
            <br />
            <span className="pl-[3px] tracking-[0.8px]">Arizona State University</span>
          </p>
        </div>
      </div>
    </main>
  );
}

export default function App() {
  return (
    <div className="relative flex h-[1912px] w-[2940px] flex-col overflow-hidden bg-[#323234] font-['Inter']">
      <MenuBar />
      <BrowserBar />
      <div className="flex min-h-0 flex-1">
        <TabStrip />
        <div className="w-[2px] shrink-0 bg-[#4a4a4c]" />
        <div className="flex flex-1 border-b-4 border-l-2 border-[#0a0b0d] bg-[#0a0b0d]">
          <Viewer />
          <div className="mt-[2px] w-[30px] shrink-0 bg-[#1f2327]" />
          <div className="w-[2px] shrink-0 bg-[#08090b]" />
          <div className="flex flex-1 flex-col bg-[#15171b]">
            <div className="h-[106px] bg-[#1e2227]" />
          </div>
        </div>
      </div>
      <div className="pointer-events-none absolute left-[740px] top-[513px] h-[895px] w-[1460px] rounded-[21px] shadow-[0_0_0_1px_rgba(0,0,0,0.45),0_28px_60px_rgba(0,0,0,0.28),0_0_30px_rgba(0,0,0,0.06)]" />
      <SaveDialog />
    </div>
  );
}
